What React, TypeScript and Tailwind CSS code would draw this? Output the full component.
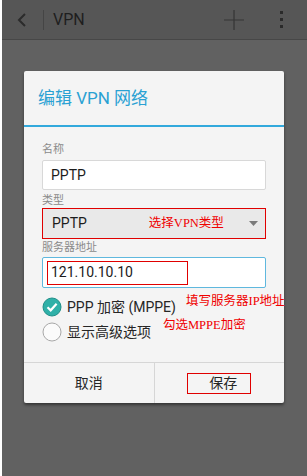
import React from 'react';

const ui = { fontFamily: 'Roboto, "Noto Sans CJK SC", sans-serif' };
const note = { fontFamily: '"Liberation Serif", "Noto Sans CJK SC", serif' };

function ActionBar() {
  return (
    <div className="h-[40px] shrink-0 bg-[#565656] border-b border-[#474747] flex items-center">
      <svg width="14" height="16" viewBox="0 0 14 16" className="ml-[13px]">
        <path d="M10 2 L4 8 L10 14" fill="none" stroke="#2b2b2b" strokeWidth="2" />
      </svg>
      <div className="ml-[14px] w-px h-[20px] bg-[#454545]" />
      <span className="ml-[9px] text-[16px] text-[#1e1e1e]" style={ui}>VPN</span>
      <div className="flex-1" />
      <svg width="22" height="22" viewBox="0 0 22 22" className="mr-[35px]">
        <path d="M11 1 V21 M1 11 H21" stroke="#353535" strokeWidth="1.2" />
      </svg>
      <div className="flex flex-col gap-[4px] mr-[24px]">
        <div className="w-[3px] h-[3px] bg-[#2a2a2a]" />
        <div className="w-[3px] h-[3px] bg-[#2a2a2a]" />
        <div className="w-[3px] h-[3px] bg-[#2a2a2a]" />
      </div>
    </div>
  );
}

function Label({ children }: { children: React.ReactNode }) {
  return <div className="text-[11px] leading-[14px] text-[#8a8a8a]">{children}</div>;
}

export default function App() {
  return (
    <div className="w-[307px] h-[476px] bg-[#616161] border-l-2 border-white flex flex-col overflow-hidden" style={ui}>
      <ActionBar />
      <div className="flex-1 pl-[22px] pt-[31px]">
        <div className="w-[260px] h-[332px] bg-[#f4f4f4] rounded-[2px] shadow-[0_2px_3px_rgba(0,0,0,0.45)] flex flex-col">
          <div className="h-[54px] flex items-center pl-[14px] pt-[2px]">
            <span className="text-[17px] text-[#2aa1d3]">编辑 VPN 网络</span>
          </div>
          <div className="h-[2px] bg-[#32a9dc]" />
          <div className="flex-1 px-[18px] pt-[16px]">
            <Label>名称</Label>
            <div className="mt-[3px] h-[30px] bg-white border border-[#d8d8d8] rounded-[2px] flex items-center pl-[8px] text-[14px] text-[#1c1c1c]">
              PPTP
            </div>
            <div className="mt-[4px]">
              <Label>类型</Label>
            </div>
            <div className="h-[31px] bg-[#e9e9e9] border border-[#e00000] flex items-center pl-[9px] pr-[7px] text-[14px] text-[#1c1c1c]">
              <span>PPTP</span>
              <span className="ml-[62px] text-[12.5px] text-[#f00000]" style={note}>选择VPN类型</span>
              <div className="flex-1" />
              <svg width="9" height="5" viewBox="0 0 9 5">
                <path d="M0 0 H9 L4.5 5 Z" fill="#7a7a7a" />
              </svg>
            </div>
            <div className="mt-[2px]">
              <Label>服务器地址</Label>
            </div>
            <div className="mt-[2px] h-[31px] bg-white border border-[#5fb8de] rounded-[2px] flex items-center pl-[4px]">
              <div className="w-[141px] h-[24px] border border-[#e00000] flex items-center pl-[3px] text-[14px] text-[#1c1c1c]">
                121.10.10.10
              </div>
            </div>
            <div className="relative mt-[9px] flex items-center h-[20px]">
              <svg width="20" height="20" viewBox="0 0 20 20">
                <circle cx="10" cy="10" r="9" fill="#2fb0a8" stroke="#1f8f88" strokeWidth="1" />
                <path d="M5.5 10.2 L8.7 13.3 L14.6 6.8" fill="none" stroke="white" strokeWidth="2.2" />
              </svg>
              <span className="ml-[5px] text-[14px] text-[#262626]">PPP 加密 (MPPE)</span>
              <span className="absolute left-[144px] top-[-5px] text-[12.5px] text-[#f00000] whitespace-nowrap" style={note}>
                填写服务器IP地址
              </span>
              <span className="absolute left-[121px] top-[19px] text-[12.5px] text-[#f00000] whitespace-nowrap" style={note}>
                勾选MPPE加密
              </span>
            </div>
            <div className="mt-[5px] flex items-center h-[20px]">
              <svg width="20" height="20" viewBox="0 0 20 20">
                <circle cx="10" cy="10" r="9" fill="#fbfbfb" stroke="#a8a8a8" strokeWidth="1" />
              </svg>
              <span className="ml-[5px] text-[14px] text-[#262626]">显示高级选项</span>
            </div>
          </div>
          <div className="h-[41px] border-t border-[#d6d6d6] flex">
            <div className="flex-1 flex items-center justify-center text-[14px] text-[#262626]">取消</div>
            <div className="w-px bg-[#d6d6d6]" />
            <div className="flex-1 flex items-center justify-center">
              <div className="w-[64px] h-[21px] border border-[#e00000] flex items-center justify-center pl-[8px] text-[14px] text-[#262626]">
                保存
              </div>
            </div>
          </div>
        </div>
      </div>
    </div>
  );
}
